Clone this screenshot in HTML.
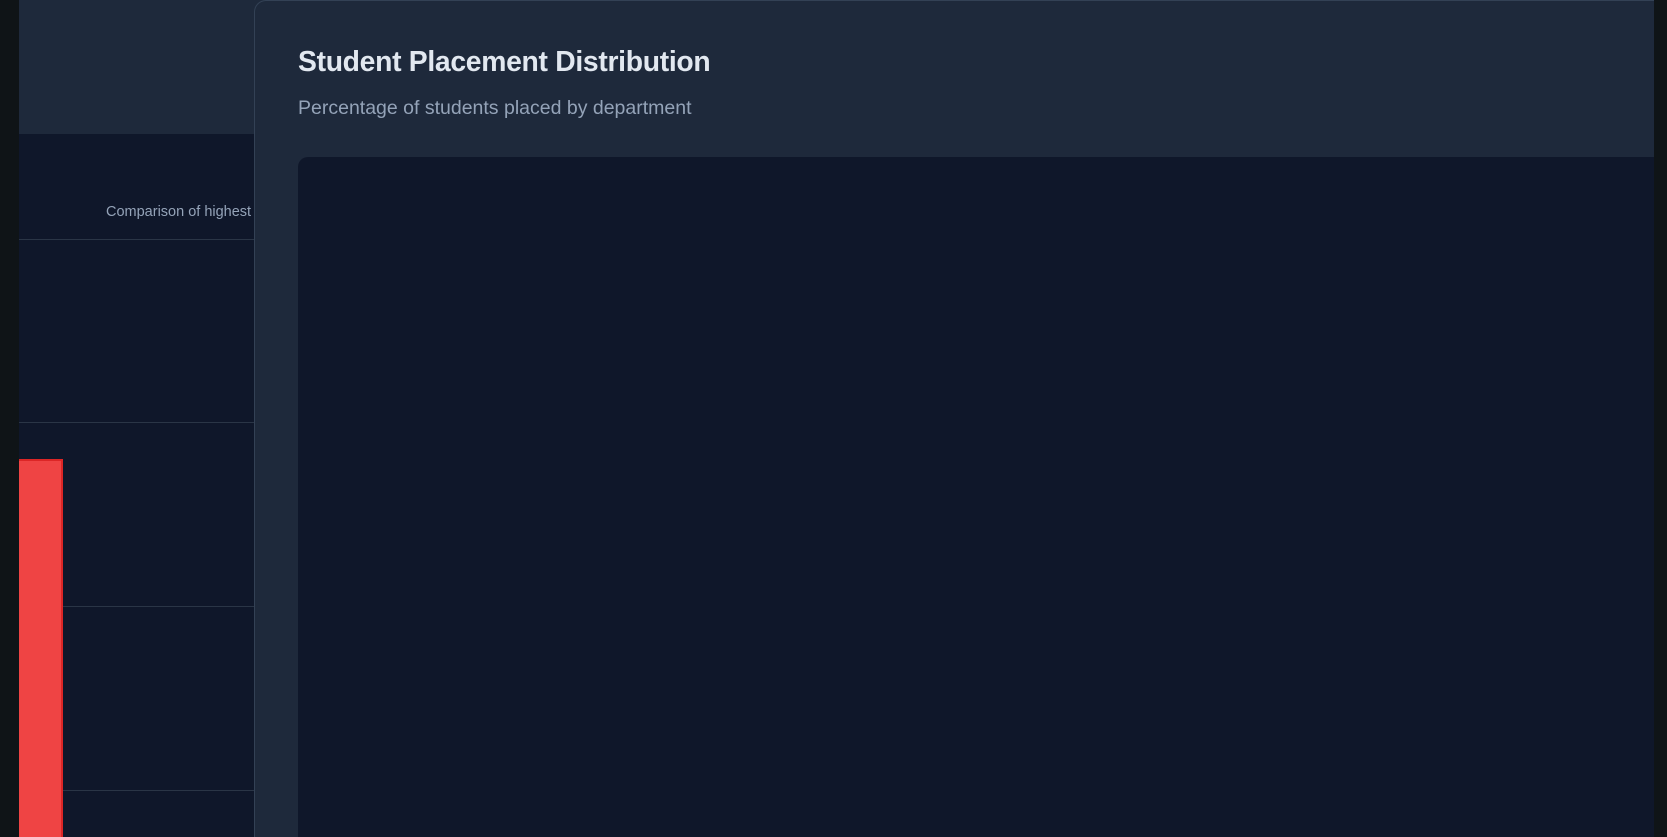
<!DOCTYPE html>
<html><head><style>
*{margin:0;padding:0;box-sizing:border-box}
html,body{width:1667px;height:837px;overflow:hidden}
body{background:#0f172a;font-family:"Liberation Sans",sans-serif;position:relative}
.strip{position:absolute;left:0;top:0;width:19px;height:837px;background:#0f1417}
.rstrip{position:absolute;left:1654px;top:0;width:13px;height:837px;background:#0f1417}
.hdr{position:absolute;left:19px;top:0;width:1635px;height:134px;background:#1e293b}
.sub1{position:absolute;left:106px;top:204px;font-size:14.5px;color:#94a3b8}
.line{position:absolute;left:19px;width:240px;height:1px;background:#2a3546}
.bar{position:absolute;left:19px;top:459px;width:44px;height:378px;background:#ef4444;border-right:2px solid #dc2626;border-top:2px solid #dc2626}
.panel{position:absolute;left:254px;top:0;width:1400px;height:837px;background:#1e293b;border-left:1px solid #334155;border-top:1px solid #334155;border-radius:12px 0 0 0}
.title{position:absolute;left:298px;top:45px;font-size:28.3px;font-weight:bold;color:#e2e8f0;letter-spacing:-0.3px}
.sub{position:absolute;left:298px;top:97px;font-size:19.5px;color:#94a3b8}
.inner{position:absolute;left:298px;top:157px;width:1356px;height:680px;background:#0f172a;border-radius:10px 0 0 0}
</style></head><body>
<div class="hdr"></div>
<div class="sub1">Comparison of highest package</div>
<div class="line" style="top:239px"></div>
<div class="line" style="top:422px"></div>
<div class="line" style="top:606px"></div>
<div class="line" style="top:790px"></div>
<div class="bar"></div>
<div class="panel"></div>
<div class="title">Student Placement Distribution</div>
<div class="sub">Percentage of students placed by department</div>
<div class="inner"></div>
<div class="strip"></div>
<div class="rstrip"></div>
</body></html>
